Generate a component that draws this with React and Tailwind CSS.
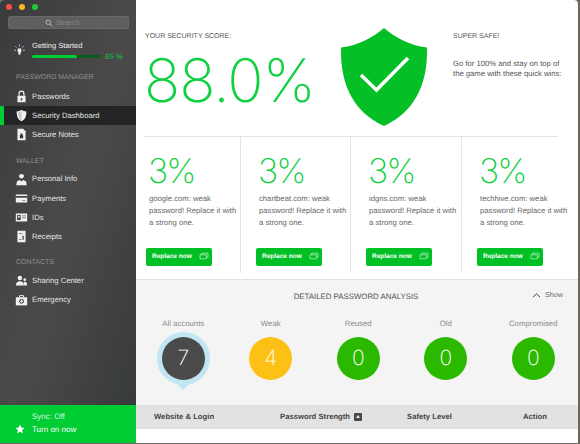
const F = { fontFamily: '"Liberation Sans", Arial, sans-serif' };
const THIN = { fontFamily: 'Inter, sans-serif' };

const I = ({ children, vb = "0 0 16 16", cls = "w-[13px] h-[13px]" }) => (
  <svg viewBox={vb} className={cls} fill="#f0f0f0">{children}</svg>
);

const Lock = () => (
  <I><path d="M3 7h10v8H3z" /><path d="M5 7V4.500a3 3 0 0 1 6 0V7" fill="none" stroke="#f0f0f0" strokeWidth="1.500" /><path d="M7 10h2v3H7z" fill="#444" /></I>
);
const Shield = () => (
  <I><path d="M8 1c2 1.400 3.600 2 6 2 0 6-1.400 10-6 12C3.400 13 2 9 2 3c2.400 0 4-.6 6-2z" /><path d="M8 2.500V14C5 12.500 4 9 3.600 4.200 5.500 4 7 3.300 8 2.500z" fill="#c8c8c8" /></I>
);
const Note = () => (
  <I><path d="M3 1h7l3 3v11H3z" /><path d="M6 9h4v3.500H6zM6.800 9V7.800a1.200 1.200 0 0 1 2.400 0V9" fill="#333" /></I>
);
const Person = () => (
  <I><circle cx="8" cy="4" r="2.800" /><path d="M5 2.500h6v1H5zM1.500 15l1-5 3.500-1.500 2 2 2-2 3.500 1.500 1 5z" /></I>
);
const Card = () => (
  <I><path d="M1 3h14v10H1z" /><path d="M1 5h14v2H1z" fill="#444" /><path d="M9 10h4v1H9z" fill="#777" /></I>
);
const Id = () => (
  <I><path d="M1 3h14v10H1z" /><path d="M2.500 5h4.500v6H2.500z" fill="#444" /><path d="M8.500 5.500h5v1h-5zM8.500 8h5v1h-5z" fill="#666" /><circle cx="4.700" cy="7" r="1.200" /></I>
);
const Receipt = () => (
  <I><path d="M3 1h10v14H3z" /><path d="M5 4h4v1H5zM9 7h2v5H9zM5 11h3v1H5z" fill="#666" /></I>
);
const Share = () => (
  <I><circle cx="6" cy="5" r="2.800" /><path d="M1 14l1-3.500L5 9h2l3 1.500 1 3.500z" /><circle cx="12" cy="7" r="1.700" /><path d="M11 14l-.5-3.500 1-1h1.500l1.500 1.500.500 3z" /></I>
);
const Aid = () => (
  <I><path d="M1 4h14v10H1z" /><path d="M5.500 4V2h5v2" fill="none" stroke="#f0f0f0" strokeWidth="1.200" /><circle cx="8" cy="9" r="3" fill="#444" /><path d="M7.300 7.200h1.400v1.100h1.100v1.400H8.700v1.100H7.300V9.700H6.200V8.300h1.100z" /></I>
);

const Row = ({ icon, label, active }) => (
  <div className={`h-[19.2px] flex items-center text-[7.700px] text-[#e4e4e4] ${active ? "bg-[#232425] border-l-[4px] border-[#00cc33] pl-[11px]" : "pl-[15px]"}`}>
    <span className="w-[17px] flex">{icon}</span>
    <span>{label}</span>
  </div>
);

const Head = ({ children, cls }) => (
  <div className={`pl-[16px] text-[7px] h-[8px] text-[#8f9091] leading-[8px] ${cls}`}>{children}</div>
);

const Sidebar = () => (
  <aside className="w-[136px] shrink-0 flex flex-col bg-gradient-to-br from-[#3a3b3d] via-[#4a4a4a] to-[#36393a]">
    <div className="flex gap-[6.500px] pl-[5.500px] pt-[3.500px]">
      <span className="w-[6.500px] h-[6.500px] rounded-full bg-[#fc4d48]" />
      <span className="w-[6.500px] h-[6.500px] rounded-full bg-[#fdb527]" />
      <span className="w-[6.500px] h-[6.500px] rounded-full bg-[#22c83a]" />
    </div>
    <div className="mt-[6px] ml-[8px] w-[121px] h-[13px] rounded-[2px] bg-[#5d5e5f] border border-[#676869] flex items-center justify-center gap-[3px] pr-[12px] text-[7.500px] text-[#868788]">
      <svg viewBox="0 0 16 16" className="w-[8px] h-[8px]" fill="none" stroke="#c4c4c4" strokeWidth="1.800"><circle cx="6.500" cy="6.500" r="4.500" /><path d="M10 10l5 5" /></svg>
      <span>Search</span>
    </div>
    <div className="mt-[12px] flex pl-[13px]">
      <svg viewBox="0 0 16 16" className="w-[13px] h-[13px] mt-[2px]" fill="#f0f0f0" stroke="#f0f0f0">
        <path d="M6 7h4v4H9v3H7v-3H6z" strokeWidth="0.500" />
        <path d="M8 2v2M3 4l1.500 1.500M13 4l-1.500 1.500M1.500 9h2M12.500 9h2" strokeWidth="1" fill="none" />
      </svg>
      <div className="ml-[6px]">
        <div className="text-[7.500px] text-[#f0f0f0] leading-[12px] -mt-[1px]">Getting Started</div>
        <div className="flex items-center h-[9px]">
          <div className="w-[69px] h-[2.500px] bg-[#0b5a20] flex rounded-full">
            <div className="w-[45px] bg-[#00cc33] rounded-full" />
          </div>
          <span className="ml-[4px] text-[7.700px] text-[#0cc739]">65 %</span>
        </div>
      </div>
    </div>
    <Head cls="mt-[13px]">PASSWORD MANAGER</Head>
    <div className="mt-[5px]">
      <Row icon={<Lock />} label="Passwords" />
      <Row icon={<Shield />} label="Security Dashboard" active />
      <Row icon={<Note />} label="Secure Notes" />
    </div>
    <Head cls="mt-[13px]">WALLET</Head>
    <div className="mt-[4px]">
      <Row icon={<Person />} label="Personal Info" />
      <Row icon={<Card />} label="Payments" />
      <Row icon={<Id />} label="IDs" />
      <Row icon={<Receipt />} label="Receipts" />
    </div>
    <Head cls="mt-[13px]">CONTACTS</Head>
    <div className="mt-[4px]">
      <Row icon={<Share />} label="Sharing Center" />
      <Row icon={<Aid />} label="Emergency" />
    </div>
    <div className="mt-auto h-[38px] bg-[#00cc33] text-white text-[8px] pl-[32px] pt-[6px] relative">
      <div className="leading-[12px] text-[#d8f7df]">Sync: Off</div>
      <div className="leading-[12px] mt-[1px] font-medium">Turn on now</div>
      <svg viewBox="0 0 16 16" className="absolute left-[15px] top-[19px] w-[10px] h-[10px]" fill="#fff"><path d="M8 .8l2.200 4.800 5.200.6-3.900 3.500 1.100 5.200L8 12.300l-4.600 2.600 1.100-5.200L.6 6.200l5.200-.6z" /></svg>
    </div>
  </aside>
);

const Score = () => (
  <section className="h-[137px] flex text-[#555]">
    <div className="w-[194px] pl-[9px] pt-[32px]">
      <div className="text-[7px] leading-[10px]">YOUR SECURITY SCORE:</div>
      <div className="text-[60px] leading-[64px] mt-[7px] text-[#0fd040] font-extralight whitespace-nowrap tracking-[-1px] -ml-[1px]" style={THIN}>88.0%</div>
    </div>
    <div className="w-[123px] pt-[28px] pl-[10px]">
      <svg viewBox="0 0 88 98" className="w-[88px] h-[98px]">
        <path d="M44 0C53 8 70 18 87 19.500 88 60 72 85 44 98 16 85 0 60 1 19.500 18 18 35 8 44 0z" fill="#05bf27" />
        <path d="M21 47l15.500 15L68 30" fill="none" stroke="#fff" strokeWidth="3.500" />
      </svg>
    </div>
    <div className="pt-[32px] text-[7.700px] leading-[10px]">
      <div className="text-[7px]">SUPER SAFE!</div>
      <div className="mt-[17px]">Go for 100% and stay on top of<br />the game with these quick wins:</div>
    </div>
  </section>
);

const WinCard = ({ site, first, wide }) => (
  <div className={`h-[136px] flex flex-col ${first ? "w-[104px] pl-[10px]" : `${wide ? "w-[111px]" : "w-[110px]"} pl-[15px] border-l border-[#e4e4e4]`}`}>
    <div className="pl-[2px] text-[#0fd040] text-[34px] leading-[40px] mt-[15px] font-extralight tracking-[-2px]" style={THIN}>3%</div>
    <div className="pl-[3px] text-[7.700px] leading-[12px] text-[#666] mt-[1px] w-[92px] h-[36px]">
      {`${site}: weak password! Replace it with a strong one.`}
    </div>
    <div className="mt-[19px] w-[66px] h-[18px] rounded-[2px] bg-[#00c026] text-white text-[6.500px] font-bold flex items-center pl-[6px] whitespace-nowrap">
      <span>Replace now</span>
      <svg viewBox="0 0 12 10" className="w-[10px] h-[8px] ml-[7px] -mt-[3px]" fill="none" stroke="#d6f5dc" strokeWidth="0.800"><path d="M1 3.500h8v5H1zM3 3.500v-2h8v5H9" /></svg>
    </div>
  </div>
);

const Stat = ({ label, value, color, active }) => (
  <div className="flex flex-col items-center">
    <div className="text-[7.800px] leading-[10px] text-[#8a8a8a] mt-[1px]">{label}</div>
    <div className="mt-[8px] relative w-[43px] h-[43px]">
      {active && (
        <>
          <span className="absolute -inset-[5px] rounded-full bg-[#bfe6f2]" />
          <span className="absolute left-[16.500px] top-[41px] w-[10px] h-[10px] rotate-45 bg-[#bfe6f2] rounded-[1px]" />
        </>
      )}
      <div className={`absolute inset-0 rounded-full flex items-center justify-center text-white text-[21px] font-extralight ${color}`} style={THIN}>{value}</div>
    </div>
  </div>
);

const Analysis = () => (
  <section className="h-[126px] bg-[#f4f4f4] border-t border-[#e2e2e2] flex flex-col">
    <div className="h-[33px] relative flex items-center justify-center pr-[2px] text-[7.850px] text-[#555]">
      DETAILED PASSWORD ANALYSIS
      <div className="absolute left-[396px] top-[10px] flex items-center gap-[4px] text-[7.200px] text-[#666]">
        <svg viewBox="0 0 10 6" className="w-[9px] h-[5px]" fill="none" stroke="#444" strokeWidth="1.200"><path d="M.7 5L5 1l4.300 4" /></svg>
        Show
      </div>
    </div>
    <div className="grid grid-cols-5 pl-[3.500px] pr-[1px] mt-[5px]">
      <Stat label="All accounts" value="7" color="bg-[#4a4a4a]" active />
      <Stat label="Weak" value="4" color="bg-[#fdc014]" />
      <Stat label="Reused" value="0" color="bg-[#2bb900]" />
      <Stat label="Old" value="0" color="bg-[#2bb900]" />
      <Stat label="Compromised" value="0" color="bg-[#2bb900]" />
    </div>
  </section>
);

const TableHead = () => (
  <div className="h-[24px] bg-[#e2e2e2] flex items-center text-[7.700px] font-bold text-[#444] whitespace-nowrap">
    <span className="w-[144px] pl-[18px]">Website &amp; Login</span>
    <span className="w-[127px] flex items-center gap-[4px]">
      Password Strength
      <svg viewBox="0 0 8 8" className="w-[8px] h-[8px]"><rect width="8" height="8" rx="1" fill="#4a4a4a" /><path d="M4 2l2 3H2z" fill="#eee" /></svg>
    </span>
    <span className="w-[116px]">Safety Level</span>
    <span>Action</span>
  </div>
);

export default function App() {
  return (
    <div className="w-[580px] h-[444px] bg-[#6a6660] overflow-hidden [text-rendering:geometricPrecision]" style={F}>
      <div className="w-[578px] h-[443px] flex bg-white rounded-t-[4px] overflow-hidden">
        <Sidebar />
        <main className="flex-1 flex flex-col min-w-0">
          <Score />
          <div className="ml-[8px] mr-[20px] h-px bg-[#e4e4e4] -mt-px" />
          <div className="flex">
            <WinCard site="google.com" first />
            <WinCard site="chartbeat.com" />
            <WinCard site="idgns.com" wide />
            <WinCard site="techhive.com" />
          </div>
          <div className="h-[6px]" />
          <Analysis />
          <TableHead />
        </main>
      </div>
    </div>
  );
}
